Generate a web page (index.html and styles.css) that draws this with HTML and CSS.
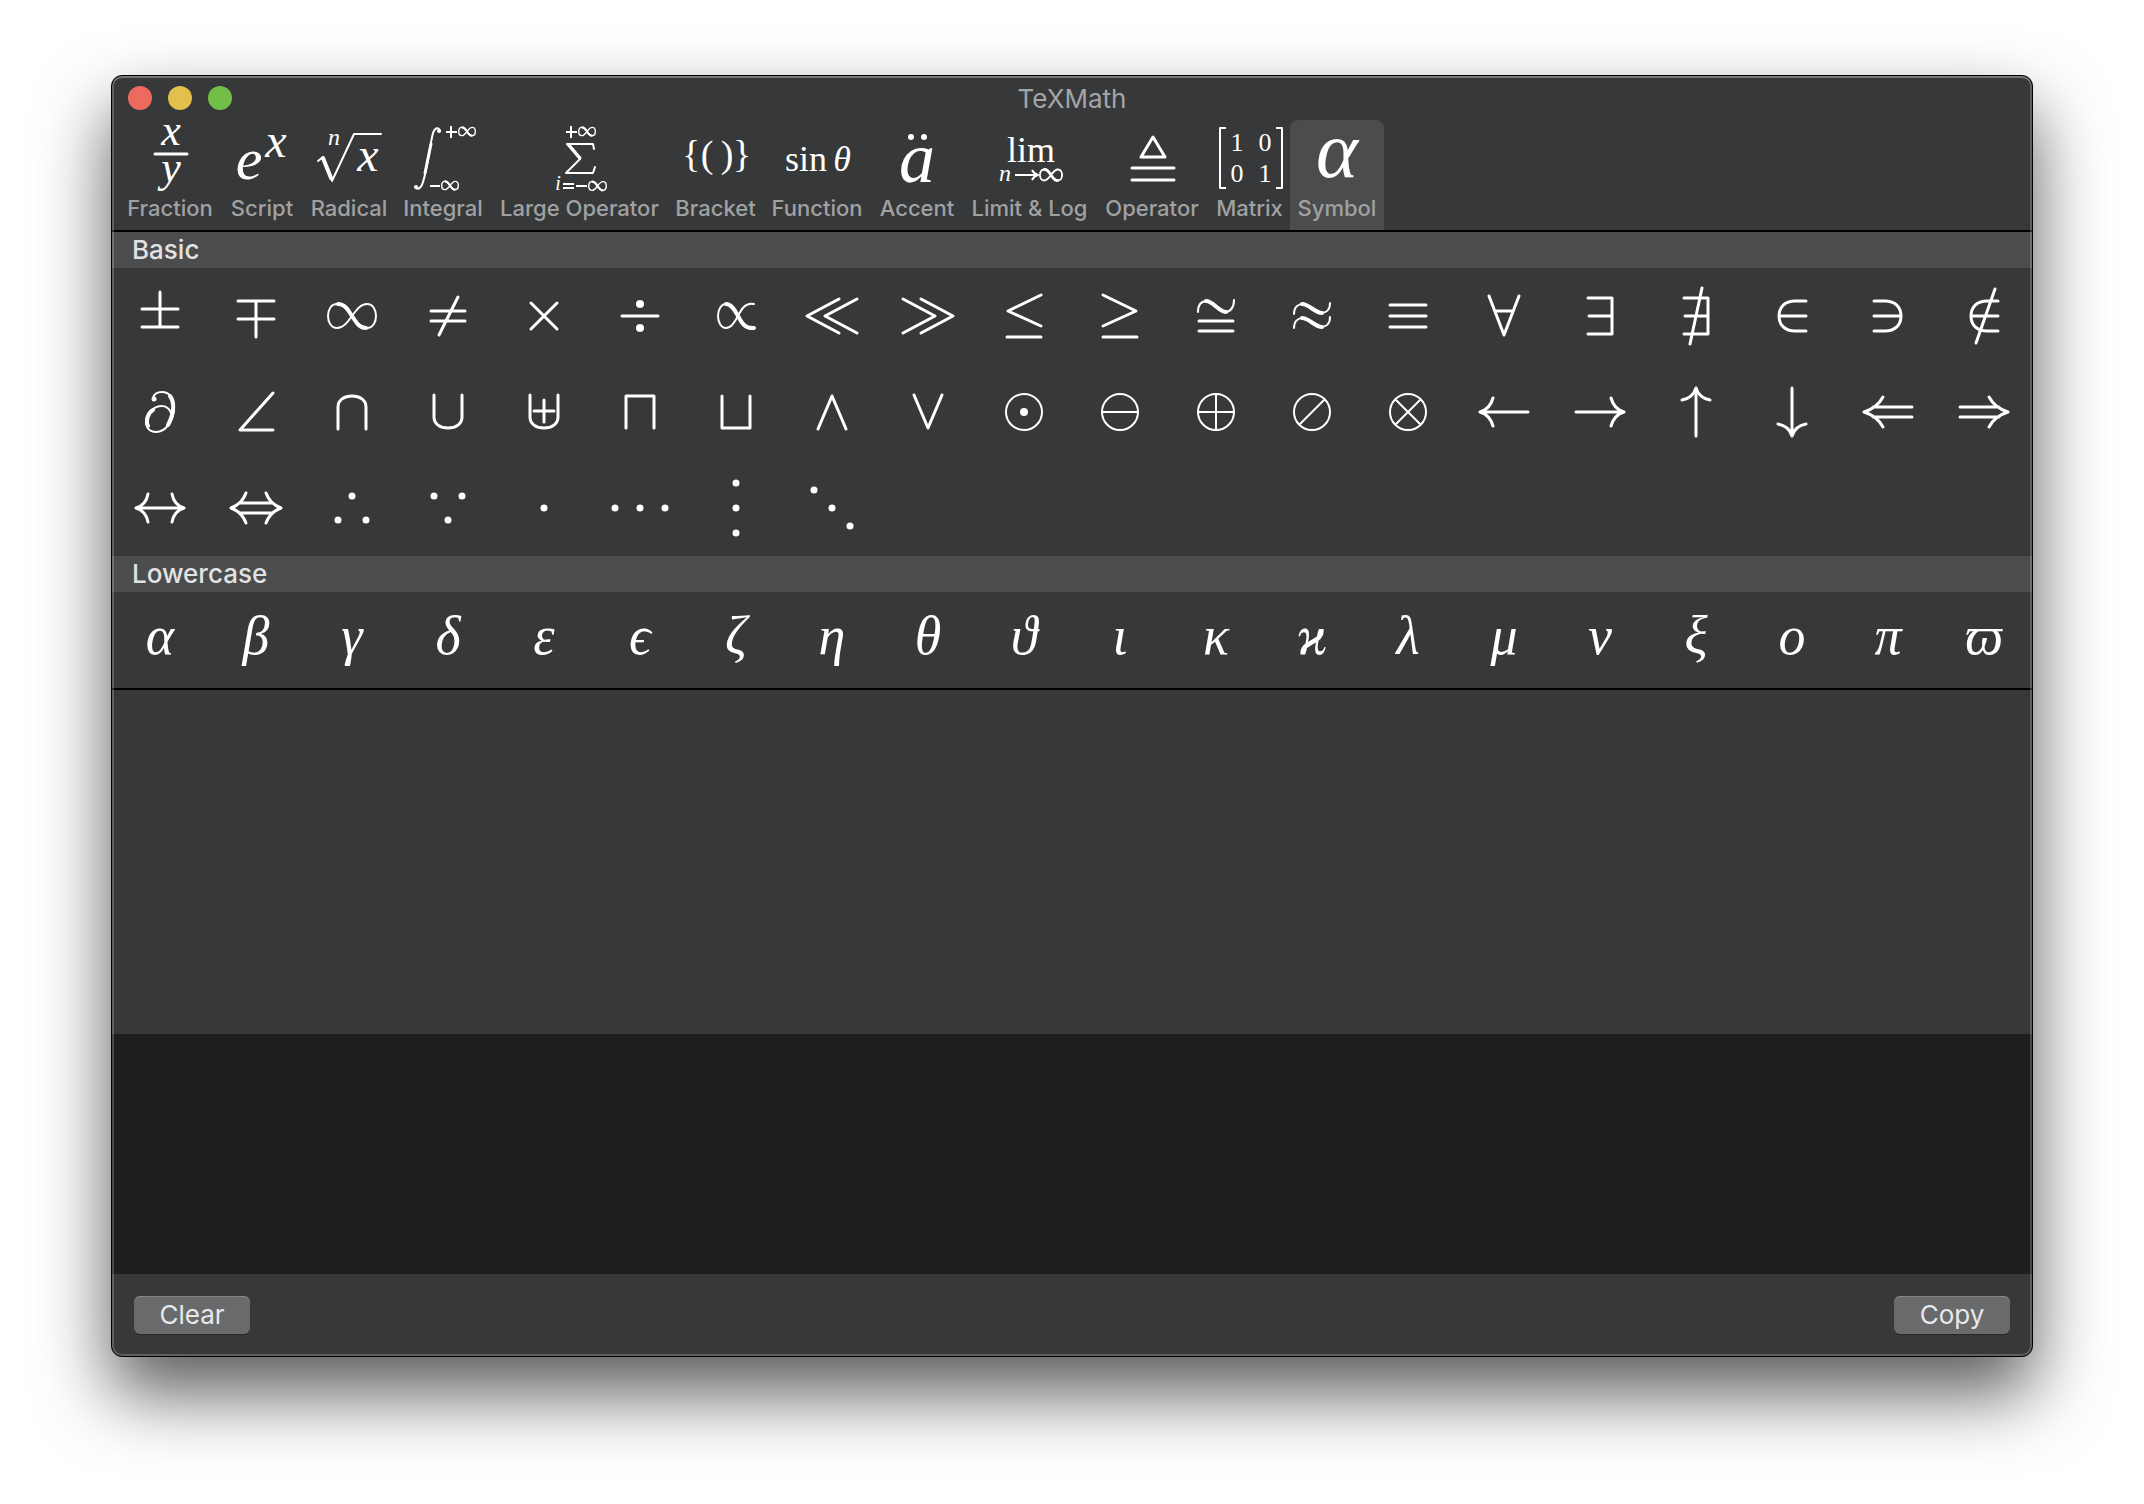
FILE: index.html
```html
<!DOCTYPE html>
<html lang="en">
<head>
<meta charset="utf-8">
<title>TeXMath</title>
<link rel="stylesheet" href="styles.css">
</head>
<body>
<svg class="defs" aria-hidden="true">
  <symbol id="inf" viewBox="-26 -15 52 30">
    <path d="M0 0C-5-7-9-12-15-12S-24-6-24 0S-21 12-15 12S-5 7 0 0S9-12 15-12S24-6 24 0S21 12 15 12S5 7 0 0"/>
    <path class="bold" d="M-14-12C-7-12-4-6 0 0S7 12 14 12"/>
  </symbol>
  <symbol id="inf-small" viewBox="-26 -15 52 30">
    <path d="M0 0C-5-7-9-12-15-12S-24-6-24 0S-21 12-15 12S-5 7 0 0S9-12 15-12S24-6 24 0S21 12 15 12S5 7 0 0"/>
    <path class="bold" d="M-14-12C-7-12-4-6 0 0S7 12 14 12"/>
  </symbol>
</svg>
<main class="window">
  <header class="titlebar">
    <div class="lights">
      <button class="light close" aria-label="Close"></button>
      <button class="light minimize" aria-label="Minimize"></button>
      <button class="light zoom" aria-label="Zoom"></button>
    </div>
    <h1 class="title">TeXMath</h1>
  </header>

  <nav class="toolbar">
    <button class="tool fraction">
      <svg viewBox="-40 0 80 72"><text class="it s44" x="1" y="25">x</text><path d="M-15 34H17"/><text class="it s44" x="1" y="62">y</text></svg>
      <span>Fraction</span>
    </button>
    <button class="tool script">
      <svg viewBox="-40 0 80 72"><text class="it s60" x="-13" y="59">e</text><text class="it s48" x="14" y="37">x</text></svg>
      <span>Script</span>
    </button>
    <button class="tool radical">
      <svg viewBox="-40 0 80 72"><text class="it s24" x="-15" y="25">n</text><path class="thin" d="M-31 41L-26 37L-17 61L5 14H32"/><path class="bold" d="M-26 38L-18 58"/><text class="it s48" x="19" y="51">x</text></svg>
      <span>Radical</span>
    </button>
    <button class="tool integral">
      <svg viewBox="-40 0 80 72"><path class="thin" d="M-3 11C-4 7-8 7-10 13C-13 24-16 50-20 62C-22 69-26 70-28 67"/><path d="M-12 24L-18 53"/><circle cx="-4" cy="11" r="2"/><circle cx="-27" cy="67" r="2"/><path class="hair" d="M3 12H14M8 6V18M-13 66H-3"/><use href="#inf-small" x="15" y="6" width="18" height="11"/><use href="#inf-small" x="-2" y="60" width="18" height="11"/></svg>
      <span>Integral</span>
    </button>
    <button class="tool large">
      <svg viewBox="-40 0 80 72"><path class="hair" d="M-14 12H-3M-9 6V18"/><use href="#inf-small" x="-2" y="6" width="18" height="11"/><path class="thin" d="M14 29L13 24H-13L0 39L-14 53H13L15 47"/><path d="M-11 25L0 38"/><text class="it s20" x="-22" y="70">i</text><path class="hair" d="M-17 64H-6M-17 68H-6M-4 66H7"/><use href="#inf-small" x="8" y="60" width="19" height="12"/></svg>
      <span>Large Operator</span>
    </button>
    <button class="tool bracket">
      <svg viewBox="-40 0 80 72"><text class="rm s38" x="-25" y="47">{</text><text class="rm s38" x="-9" y="47">(</text><text class="rm s38" x="11" y="47">)</text><text class="rm s38" x="26" y="47">}</text></svg>
      <span>Bracket</span>
    </button>
    <button class="tool function">
      <svg viewBox="-40 0 80 72"><text class="rm s36" x="-11" y="51">sin</text><text class="it s36" x="25" y="51">θ</text></svg>
      <span>Function</span>
    </button>
    <button class="tool accent">
      <svg viewBox="-40 0 80 72"><circle cx="-6" cy="17" r="3"/><circle cx="7" cy="17" r="3"/><text class="it s72" x="0" y="62">a</text></svg>
      <span>Accent</span>
    </button>
    <button class="tool limit">
      <svg viewBox="-40 0 80 72"><text class="rm s36" x="1" y="42">lim</text><text class="it s24" x="-25" y="61">n</text><path class="hair" d="M-15 55H7M2 50Q4 54 8 55Q4 56 2 60"/><use href="#inf-small" x="9" y="48" width="24" height="14"/></svg>
      <span>Limit &amp; Log</span>
    </button>
    <button class="tool operator">
      <svg viewBox="-40 0 80 72"><path d="M1 17L-11 37H13ZM-20 48H22M-20 60H22"/></svg>
      <span>Operator</span>
    </button>
    <button class="tool matrix">
      <svg viewBox="-40 0 80 72"><path class="hair" d="M-24 8H-30V68H-24M26 8H32V68H26"/><text class="rm s26" x="-13" y="31">1</text><text class="rm s26" x="15" y="31">0</text><text class="rm s26" x="-13" y="62">0</text><text class="rm s26" x="15" y="62">1</text></svg>
      <span>Matrix</span>
    </button>
    <button class="tool symbol selected" aria-pressed="true">
      <svg viewBox="-40 0 80 72"><text class="it s80" x="0" y="57">α</text></svg>
      <span>Symbol</span>
    </button>
  </nav>

  <section>
    <h2 class="group">Basic</h2>
    <div class="grid">
      <button aria-label="plus or minus"><svg viewBox="-48 -48 96 96"><path d="M-18-7H18M-18 11H18M0-24V11"/></svg></button>
      <button aria-label="minus or plus"><svg viewBox="-48 -48 96 96"><path d="M-18-15H18M-18 3H18M0-15V21"/></svg></button>
      <button aria-label="infinity"><svg viewBox="-48 -48 96 96"><use href="#inf" x="-26" y="-15" width="52" height="30"/></svg></button>
      <button aria-label="not equal"><svg viewBox="-48 -48 96 96"><path d="M-17-5H17M-17 5H17M-9 19L10-19"/></svg></button>
      <button aria-label="times"><svg viewBox="-48 -48 96 96"><path d="M-13-13L13 13M13-13L-13 13"/></svg></button>
      <button aria-label="divide"><svg viewBox="-48 -48 96 96"><path d="M-18 0H18"/><circle cx="0" cy="-12" r="4"/><circle cx="0" cy="12" r="4"/></svg></button>
      <button aria-label="proportional"><svg viewBox="-48 -48 96 96"><path class="thin" d="M18-12C9-14 5-6 2 0C-2 7-5 12-10 12S-18 6-18 0S-15-12-10-12"/><path class="bold" d="M-10-12C-4-12-1-5 2 0S8 13 18 12"/></svg></button>
      <button aria-label="much less"><svg viewBox="-48 -48 96 96"><path d="M25-17L-7 0L25 17M7-17L-25 0L7 17"/></svg></button>
      <button aria-label="much greater"><svg viewBox="-48 -48 96 96"><path d="M-25-17L7 0L-25 17M-7-17L25 0L-7 17"/></svg></button>
      <button aria-label="less or equal"><svg viewBox="-48 -48 96 96"><path d="M17-21L-16-5L17 10M-17 21H17"/></svg></button>
      <button aria-label="greater or equal"><svg viewBox="-48 -48 96 96"><path d="M-17-21L16-5L-17 10M-17 21H17"/></svg></button>
      <button aria-label="congruent"><svg viewBox="-48 -48 96 96"><path class="thin" d="M-18-4C-18-12-14-15-9-15C-3-15 3-4 9-4C14-4 18-8 18-16"/><path class="bold" d="M-10-15C-3-15 3-4 10-4"/><path d="M-17 5H17M-17 15H17"/></svg></button>
      <button aria-label="approximately"><svg viewBox="-48 -48 96 96"><path class="thin" d="M-18-2C-18-9-14-12-9-12C-3-12 3-3 9-3C14-3 18-6 18-13M-18 12C-18 5-14 2-9 2C-3 2 3 11 9 11C14 11 18 8 18 1"/><path class="bold" d="M-10-12C-3-12 3-3 10-3M-10 2C-3 2 3 11 10 11"/></svg></button>
      <button aria-label="equivalent"><svg viewBox="-48 -48 96 96"><path d="M-18-11H18M-18 0H18M-18 11H18"/></svg></button>
      <button aria-label="for all"><svg viewBox="-48 -48 96 96"><path d="M-15-20L0 19L15-20M-9-5H9"/></svg></button>
      <button aria-label="exists"><svg viewBox="-48 -48 96 96"><path d="M-12-18H12V18H-12M-11 0H12"/></svg></button>
      <button aria-label="not exists"><svg viewBox="-48 -48 96 96"><path d="M-12-18H12V18H-12M-11 0H12M-6 28L6-28"/></svg></button>
      <button aria-label="element of"><svg viewBox="-48 -48 96 96"><path d="M14-15H3C-7-15-13-9-13 0S-7 15 3 15H14M-13 0H14"/></svg></button>
      <button aria-label="contains"><svg viewBox="-48 -48 96 96"><path d="M-14-15H-3C7-15 13-9 13 0S7 15-3 15H-14M13 0H-14"/></svg></button>
      <button aria-label="not element of"><svg viewBox="-48 -48 96 96"><path d="M14-15H3C-7-15-13-9-13 0S-7 15 3 15H14M-13 0H14M-8 27L11-27"/></svg></button>

      <button aria-label="partial"><svg viewBox="-48 -48 96 96"><path class="thin" d="M-7-14C-6-18-2-20 2-20C9-20 14-14 14-5C14 8 6 20-4 20C-11 20-14 15-14 10C-14 1-6-6 2-6C7-6 11-2 12 4"/><path class="bold" d="M10-16C15-9 14 2 8 13M-12 14C-15 8-11 0-7-2"/><circle cx="-6" cy="-13" r="2.5"/></svg></button>
      <button aria-label="angle"><svg viewBox="-48 -48 96 96"><path d="M17-19L-16 18H17"/></svg></button>
      <button aria-label="intersection"><svg viewBox="-48 -48 96 96"><path d="M-14 17V-5C-14-12-8-16 0-16S14-12 14-5V17"/></svg></button>
      <button aria-label="union"><svg viewBox="-48 -48 96 96"><path d="M-14-17V5C-14 12-8 16 0 16S14 12 14 5V-17"/></svg></button>
      <button aria-label="multiset union"><svg viewBox="-48 -48 96 96"><path d="M-14-17V5C-14 12-8 16 0 16S14 12 14 5V-17M-10-1H10M0-12V10"/></svg></button>
      <button aria-label="square cap"><svg viewBox="-48 -48 96 96"><path d="M-14 16V-16H14V16"/></svg></button>
      <button aria-label="square cup"><svg viewBox="-48 -48 96 96"><path d="M-14-16V16H14V-16"/></svg></button>
      <button aria-label="and"><svg viewBox="-48 -48 96 96"><path d="M-14 17L0-16L14 17"/></svg></button>
      <button aria-label="or"><svg viewBox="-48 -48 96 96"><path d="M-14-17L0 16L14-17"/></svg></button>
      <button aria-label="circled dot"><svg viewBox="-48 -48 96 96"><circle class="ring" r="18"/><circle r="4"/></svg></button>
      <button aria-label="circled minus"><svg viewBox="-48 -48 96 96"><circle class="ring" r="18"/><path class="hair" d="M-18 0H18"/></svg></button>
      <button aria-label="circled plus"><svg viewBox="-48 -48 96 96"><circle class="ring" r="18"/><path class="hair" d="M-18 0H18M0-18V18"/></svg></button>
      <button aria-label="circled slash"><svg viewBox="-48 -48 96 96"><circle class="ring" r="18"/><path class="hair" d="M-13 13L13-13"/></svg></button>
      <button aria-label="circled times"><svg viewBox="-48 -48 96 96"><circle class="ring" r="18"/><path class="hair" d="M-13 13L13-13M-13-13L13 13"/></svg></button>
      <button aria-label="left arrow"><svg viewBox="-48 -48 96 96"><path d="M24 0H-24M-11-14Q-14-3-24 0Q-14 3-11 14"/></svg></button>
      <button aria-label="right arrow"><svg viewBox="-48 -48 96 96"><path d="M-24 0H24M11-14Q14-3 24 0Q14 3 11 14"/></svg></button>
      <button aria-label="up arrow"><svg viewBox="-48 -48 96 96"><path d="M0 24V-24M-14-12Q-3-14 0-24Q3-14 14-12"/></svg></button>
      <button aria-label="down arrow"><svg viewBox="-48 -48 96 96"><path d="M0-24V24M-14 12Q-3 14 0 24Q3 14 14 12"/></svg></button>
      <button aria-label="double left arrow"><svg viewBox="-48 -48 96 96"><path d="M24-5H-15M24 5H-15M-5-15Q-11-4-24 0Q-11 4-5 15"/></svg></button>
      <button aria-label="double right arrow"><svg viewBox="-48 -48 96 96"><path d="M-24-5H15M-24 5H15M5-15Q11-4 24 0Q11 4 5 15"/></svg></button>

      <button aria-label="left right arrow"><svg viewBox="-48 -48 96 96"><path d="M-24 0H24M-12-14Q-14-3-24 0Q-14 3-12 14M12-14Q14-3 24 0Q14 3 12 14"/></svg></button>
      <button aria-label="double left right arrow"><svg viewBox="-48 -48 96 96"><path d="M-16-5H16M-16 5H16M-10-15Q-14-4-25 0Q-14 4-10 15M10-15Q14-4 25 0Q14 4 10 15"/></svg></button>
      <button aria-label="therefore"><svg viewBox="-48 -48 96 96"><circle cy="-12" r="3.5"/><circle cx="-14" cy="12" r="3.5"/><circle cx="14" cy="12" r="3.5"/></svg></button>
      <button aria-label="because"><svg viewBox="-48 -48 96 96"><circle cy="12" r="3.5"/><circle cx="-14" cy="-12" r="3.5"/><circle cx="14" cy="-12" r="3.5"/></svg></button>
      <button aria-label="centered dot"><svg viewBox="-48 -48 96 96"><circle r="3.5"/></svg></button>
      <button aria-label="horizontal dots"><svg viewBox="-48 -48 96 96"><circle cx="-25" r="3.5"/><circle r="3.5"/><circle cx="25" r="3.5"/></svg></button>
      <button aria-label="vertical dots"><svg viewBox="-48 -48 96 96"><circle cy="-25" r="3.5"/><circle r="3.5"/><circle cy="25" r="3.5"/></svg></button>
      <button aria-label="diagonal dots"><svg viewBox="-48 -48 96 96"><circle cx="-18" cy="-18" r="3.5"/><circle r="3.5"/><circle cx="18" cy="18" r="3.5"/></svg></button>
    </div>
  </section>

  <section class="last">
    <h2 class="group">Lowercase</h2>
    <div class="grid greek">
      <button>α</button><button>β</button><button>γ</button><button>δ</button><button>ε</button>
      <button>ϵ</button><button>ζ</button><button>η</button><button>θ</button><button>ϑ</button>
      <button>ι</button><button>κ</button><button>ϰ</button><button>λ</button><button>μ</button>
      <button>ν</button><button>ξ</button><button>ο</button><button>π</button><button>ϖ</button>
    </div>
  </section>

  <section class="preview" aria-label="Preview"></section>
  <textarea class="editor" aria-label="TeX source" spellcheck="false"></textarea>

  <footer class="actions">
    <button class="push">Clear</button>
    <button class="push">Copy</button>
  </footer>
</main>
</body>
</html>
```
FILE: styles.css
```css
* { box-sizing: border-box; }

body {
  margin: 0;
  min-height: 100vh;
  padding: 75px 111px 147px;
  display: flex;
  background: #fff;
  font-family: Inter, "Liberation Sans", sans-serif;
  overflow: hidden;
}

button {
  margin: 0;
  padding: 0;
  border: 0;
  background: none;
  color: inherit;
  font: inherit;
}

.defs { position: absolute; width: 0; height: 0; }

.window {
  position: relative;
  flex: 1;
  min-width: 0;
  display: flex;
  flex-direction: column;
  border: 1px solid #000;
  border-radius: 11px;
  background: #373839;
  color: #fff;
  overflow: hidden;
  box-shadow: 0 36px 72px rgba(0, 0, 0, .65);
}

/* light rim over all the panes */
.window::after {
  content: "";
  position: absolute;
  inset: 0;
  border-radius: 10px;
  box-shadow: inset 0 0 0 2px rgba(255, 255, 255, .2), inset 0 2px 0 rgba(255, 255, 255, .15);
  pointer-events: none;
}

.titlebar {
  display: grid;
  grid-template-columns: 1fr auto 1fr;
  align-items: center;
  height: 44px;
  padding: 0 16px;
}

.lights { display: flex; gap: 16px; }
.light { width: 24px; height: 24px; border-radius: 50%; }
.close { background: #ed6a5f; }
.minimize { background: #e1c04c; }
.zoom { background: #72be47; }

.title {
  margin: 0;
  padding-top: 2px;
  font-size: 26px;
  font-weight: 400;
  line-height: 32px;
  color: #a4a5a6;
}

.toolbar {
  display: grid;
  grid-template-columns: 100px 84px 90px 98px 175px 97px 106px 94px 131px 114px 81px 94px;
  height: 112px;
  padding: 0 8px;
  border-bottom: 2px solid #000;
}

.tool {
  display: flex;
  flex-direction: column;
  align-items: center;
  border-radius: 8px 8px 0 0;
  font-size: 22px;
  font-weight: 500;
  line-height: 32px;
  color: #a0a1a2;
  white-space: nowrap;
}

.tool svg { flex: none; width: 80px; height: 72px; }
.selected { background: #4b4c4d; }

svg { display: block; overflow: visible; color: #fff; }
path, .ring {
  fill: none;
  stroke: #fff;
  stroke-width: 3;
  stroke-linecap: round;
  stroke-linejoin: round;
}
circle { fill: #fff; }
.ring { fill: none; }
.thin, .ring, #inf path { stroke-width: 2; }
.hair { stroke-width: 2; stroke-linecap: butt; }
.bold, #inf .bold { stroke-width: 4; }
#inf-small path { stroke-width: 4; }
#inf-small .bold { stroke-width: 6; }

text {
  fill: #fff;
  font-family: "Liberation Serif", serif;
  font-weight: 400;
  text-anchor: middle;
}
.it { font-style: italic; }
.s20 { font-size: 20px; }
.s24 { font-size: 24px; }
.s26 { font-size: 26px; }
.s36 { font-size: 36px; }
.s38 { font-size: 38px; }
.s44 { font-size: 44px; }
.s48 { font-size: 48px; }
.s60 { font-size: 60px; }
.s72 { font-size: 72px; }
.s80 { font-size: 80px; }

.group {
  margin: 0;
  padding: 0 20px;
  background: #4b4c4d;
  color: #e1e2e2;
  font-size: 26px;
  font-weight: 500;
  line-height: 36px;
}

.grid {
  display: grid;
  grid-template-columns: repeat(20, 1fr);
  grid-auto-rows: 96px;
}
.grid button { display: grid; place-items: center; }
.grid svg { width: 96px; height: 96px; }

.greek button {
  padding-bottom: 8px;
  font-family: "Liberation Serif", "DejaVu Serif", serif;
  font-size: 54px;
  font-style: italic;
  line-height: 64px;
}

.last { border-bottom: 2px solid #000; }

.preview { flex: 1; min-height: 120px; }

.editor {
  display: block;
  width: 100%;
  height: 240px;
  padding: 12px 20px;
  border: 0;
  outline: 0;
  resize: none;
  background: #1e1e1e;
  color: #fff;
  font: 26px "Liberation Mono", monospace;
}

.actions {
  display: flex;
  justify-content: space-between;
  padding: 22px;
}

.push {
  width: 116px;
  height: 38px;
  border-radius: 6px;
  background: #696a6c;
  box-shadow: inset 0 1px 0 #858688, 0 1px 1px rgba(0, 0, 0, .3);
  color: #e8e8e9;
  font-size: 26px;
  line-height: 38px;
}
```
